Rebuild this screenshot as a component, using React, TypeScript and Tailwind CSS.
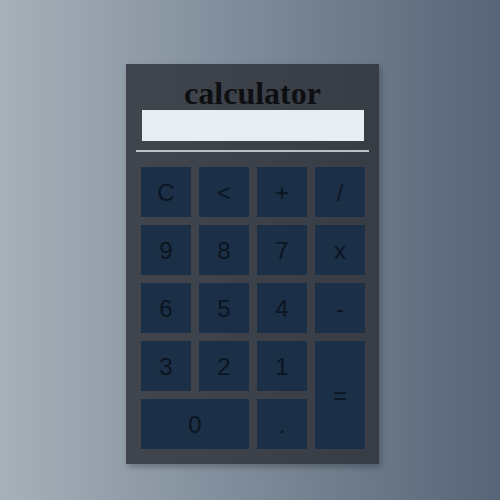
import React from 'react';

const keys: { label: string; span?: string }[] = [
  { label: 'C' },
  { label: '<' },
  { label: '+' },
  { label: '/' },
  { label: '9' },
  { label: '8' },
  { label: '7' },
  { label: 'x' },
  { label: '6' },
  { label: '5' },
  { label: '4' },
  { label: '-' },
  { label: '3' },
  { label: '2' },
  { label: '1' },
  { label: '=', span: 'row-span-2' },
  { label: '0', span: 'col-span-2' },
  { label: '.' },
];

export default function App() {
  return (
    <div className="w-[500px] h-[500px] bg-gradient-to-r from-[#a7b1ba] to-[#566577] pl-[126px] pt-[64px]">
      <div className="w-[253px] h-[400px] bg-gradient-to-r from-[#41464e] to-[#383d45] shadow-[2px_3px_6px_rgba(0,0,0,0.25)] pt-[12px] px-[10px]">
        <h1 className="text-center text-[32px] leading-[34px] font-bold text-[#0e0f12] font-['Liberation_Serif',serif]">
          calculator
        </h1>
        <input
          type="text"
          readOnly
          className="block mx-[6px] w-[222px] h-[31px] bg-[#e8edf2] outline-none"
        />
        <div className="mt-[9px] h-[2px] bg-[#bcc1c7]" />
        <div className="mt-[15px] ml-[5px] grid grid-cols-[repeat(4,50px)] grid-rows-[repeat(5,50px)] gap-[8px]">
          {keys.map((k) => (
            <button
              key={k.label}
              className={`${k.span ?? ''} bg-[#1b2f47] text-[#0b1521] text-[24px] pt-[2px] font-['Liberation_Sans',Arial,sans-serif] flex items-center justify-center`}
            >
              {k.label}
            </button>
          ))}
        </div>
      </div>
    </div>
  );
}
